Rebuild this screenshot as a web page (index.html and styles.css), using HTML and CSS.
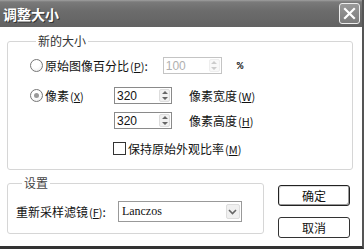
FILE: index.html
```html
<!DOCTYPE html>
<html lang="zh">
<head>
<meta charset="utf-8">
<link rel="stylesheet" href="styles.css">
</head>
<body>
<div class="window">
  <div class="titlebar">
    <span class="title">调整大小</span>
    <span class="close"><svg width="13" height="13" viewBox="0 0 13 13"><path d="M2 2 L11 11 M11 2 L2 11" stroke="#fff" stroke-width="2.2" stroke-linecap="square"/></svg></span>
  </div>
  <fieldset class="group group-size">
    <legend>新的大小</legend>
    <div class="row row-percent">
      <span class="radio"></span>
      <span class="lbl">原始图像百分比<span class="mn">(<u>P</u>)</span>:</span>
      <span class="spin disabled"><span class="val">100</span><span class="arrows"><svg width="8" height="11" viewBox="0 0 8 11"><path d="M1 4 L4 1 L7 4 Z M1 7 L4 10 L7 7 Z" fill="#ccc"/></svg></span></span>
      <span class="pct">%</span>
    </div>
    <div class="pixgrid">
      <span class="radiolbl"><span class="radio checked"></span><span class="lbl">像素<span class="mn">(<u>X</u>)</span></span></span>
      <span class="spin"><span class="val">320</span><span class="arrows"><svg width="8" height="11" viewBox="0 0 8 11"><path d="M1 4 L4 1 L7 4 Z M1 7 L4 10 L7 7 Z" fill="#666"/></svg></span></span>
      <span class="lbl">像素宽度<span class="mn">(<u>W</u>)</span></span>
      <span></span>
      <span class="spin"><span class="val">320</span><span class="arrows"><svg width="8" height="11" viewBox="0 0 8 11"><path d="M1 4 L4 1 L7 4 Z M1 7 L4 10 L7 7 Z" fill="#666"/></svg></span></span>
      <span class="lbl">像素高度<span class="mn">(<u>H</u>)</span></span>
    </div>
    <div class="row row-check">
      <span class="check"></span>
      <span class="lbl">保持原始外观比率<span class="mn">(<u>M</u>)</span></span>
    </div>
  </fieldset>
  <div class="bottom">
    <fieldset class="group group-settings">
      <legend>设置</legend>
      <div class="row row-filter">
        <span class="lbl">重新采样滤镜<span class="mn">(<u>F</u>)</span>:</span>
        <span class="select"><span class="sel-val">Lanczos</span><span class="drop"><svg width="9" height="6" viewBox="0 0 9 6"><path d="M1 1 L4.5 4.5 L8 1" stroke="#666" stroke-width="1.6" fill="none"/></svg></span></span>
      </div>
    </fieldset>
    <div class="buttons">
      <button class="btn default">确定</button>
      <button class="btn">取消</button>
    </div>
  </div>
</div>
</body>
</html>
```
FILE: styles.css
```css
* { box-sizing: border-box; }
html, body { margin: 0; padding: 0; background: #fff; }
body {
  font-family: "Noto Sans CJK SC", "Liberation Sans", sans-serif;
  font-size: 12px;
  color: #111;
}
.window {
  width: 364px;
  height: 249px;
  background: #fff;
  border-right: 2px solid #555;
  border-bottom: 3px solid #333;
  overflow: hidden;
}
.titlebar {
  height: 27px;
  display: flex;
  align-items: center;
  justify-content: space-between;
  padding: 0 2px 0 3px;
  background: linear-gradient(#a0a0a0 0, #7a7a7a 2px, #6c6c6c 40%, #626262 100%);
}
.title {
  color: #fff;
  font-weight: bold;
  font-size: 14px;
  line-height: 16px;
  text-shadow: 1px 1px 0 #333;
}
.close {
  width: 21px;
  height: 21px;
  border: 1px solid #eee;
  border-radius: 3px;
  background: linear-gradient(#9a9a9a, #7c7c7c);
  display: flex;
  align-items: center;
  justify-content: center;
}
.group {
  margin: 0;
  padding: 0;
  border: 1px solid #d6d6d6;
  border-radius: 3px;
  min-width: 0;
}
.group legend {
  padding: 0 2px;
  margin-left: 6px;
  line-height: 14px;
  font-size: 12px;
  color: #333;
}
.group-size {
  margin: 7px 0 0 7px;
  width: 346px;
  height: 136px;
  padding: 0 0 0 22px;
}
.lbl { white-space: nowrap; line-height: 14px; }
.mn { font-size: 11px; margin-left: 1px; }
.mn u { text-decoration: underline; }
.row { display: flex; align-items: center; }
.row-percent { margin-top: 9px; height: 17px; }
.radio {
  width: 13px;
  height: 13px;
  border-radius: 50%;
  border: 1px solid #777;
  background: radial-gradient(circle at 40% 35%, #fff 40%, #e6e6e6 100%);
  margin-right: 1px;
  flex: none;
  position: relative;
  display: inline-block;
}
.radio.checked::after {
  content: "";
  position: absolute;
  left: 3px; top: 3px;
  width: 5px; height: 5px;
  border-radius: 50%;
  background: #999;
}
.spin {
  height: 17px;
  border: 1px solid #8a8a8a;
  background: #fff;
  display: flex;
  align-items: center;
  justify-content: space-between;
  padding: 0 1px 0 2px;
}
.spin .val { font-family: "Liberation Sans", Arial, sans-serif; font-size: 12px; line-height: 14px; }
.spin .arrows {
  width: 11px;
  height: 13px;
  border: 1px solid #ddd;
  border-radius: 2px;
  background: #f0f0f0;
  display: flex;
  align-items: center;
  justify-content: center;
}
.spin.disabled { border-color: #c4c4c4; }
.spin.disabled .val { color: #b0b0b0; }
.spin.disabled .arrows { border-color: #eee; background: #f8f8f8; }
.row-percent .spin { width: 59px; margin-left: 15px; }
.row-percent .lbl { margin-left: 1px; }
.pct {
  margin-left: 15px;
  font-family: "Liberation Mono", monospace;
  font-size: 11px;
  font-weight: bold;
}
.pixgrid {
  display: grid;
  grid-template-columns: 67px 58px auto;
  column-gap: 17px;
  row-gap: 8px;
  margin-top: 13px;
  align-items: center;
}
.pixgrid .spin { height: 17px; }
.radiolbl { display: flex; align-items: center; gap: 1px; }
.row-check { margin-top: 13px; margin-left: 83px; height: 13px; }
.check {
  width: 13px;
  height: 13px;
  border: 1px solid #333;
  background: #fff;
  margin-right: 2px;
  flex: none;
}
.bottom {
  display: flex;
  align-items: flex-start;
  margin-top: 6px;
}
.group-settings {
  margin: 0 0 0 7px;
  width: 257px;
  height: 58px;
  padding: 0 0 0 8px;
}
.group-settings legend { color: #444; }
.row-filter { margin-top: 11px; height: 21px; }
.select {
  margin-left: 12px;
  width: 124px;
  height: 21px;
  border: 1px solid #999;
  display: flex;
  align-items: center;
  justify-content: space-between;
  padding: 0 1px 0 3px;
}
.sel-val { font-family: "Liberation Serif", serif; font-size: 12px; color: #111; }
.drop {
  width: 14px;
  height: 15px;
  border: 1px solid #ddd;
  border-radius: 2px;
  background: #f0f0f0;
  display: flex;
  align-items: center;
  justify-content: center;
}
.buttons {
  display: flex;
  flex-direction: column;
  gap: 11px;
  margin: 9px 0 0 14px;
}
.btn {
  width: 72px;
  height: 21px;
  border: 1px solid #333;
  border-radius: 3px;
  background: #fff;
  font-family: "Noto Sans CJK SC", sans-serif;
  font-size: 12px;
  line-height: 14px;
  color: #111;
  padding: 0;
}
.btn.default { box-shadow: inset -1px -1px 0 #999, inset 1px 1px 0 #ddd; border-color: #222; }
```
